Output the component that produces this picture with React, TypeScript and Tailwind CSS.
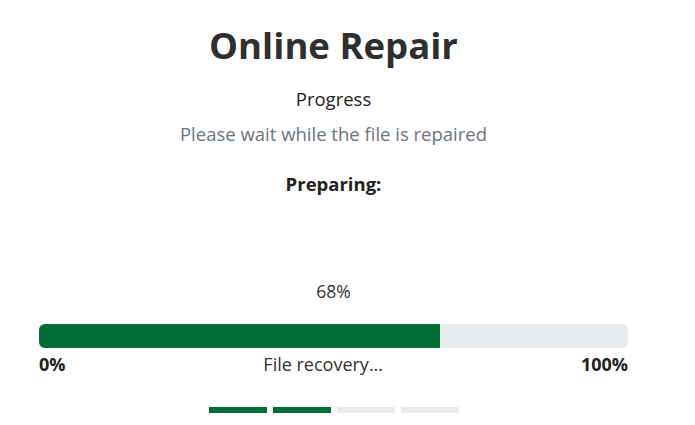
const steps = [true, true, false, false];

export default function App() {
  const percent = 68;
  return (
    <div className="min-h-[425px] bg-white text-[#333333]" style={{ fontFamily: "'Open Sans', 'Noto Sans', sans-serif" }}>
      <div className="ml-[39px] w-[589px] flex flex-col items-center pt-[21px]">
        <h1 className="text-[36.5px] leading-[48px] font-bold text-[#2f2f2f]">Online Repair</h1>
        <h2 className="mt-[16px] text-[18.5px] leading-[27px] font-medium text-[#222]">Progress</h2>
        <p className="mt-[8px] text-[18.5px] leading-[27px] text-[#6c757d]">Please wait while the file is repaired</p>
        <p className="mt-[23px] text-[18.5px] leading-[27px] font-bold text-[#222]">Preparing:</p>
        <div className="mt-[82px] text-[17.5px] leading-[24px] text-[#333]">{percent}%</div>
        <div className="mt-[21px] w-full h-[24px] rounded-[6px] bg-[#e9ecef] overflow-hidden flex">
          <div className="h-full bg-[#026e35]" style={{ width: `${percent}%` }} />
        </div>
        <div className="mt-[4px] w-full flex justify-between text-[18px] leading-[24px]">
          <span className="font-bold text-[#222]">0%</span>
          <span className="text-[#333]">File recovery...</span>
          <span className="font-bold text-[#222]">100%</span>
        </div>
        <div className="mt-[31px] flex gap-[6px]">
          {steps.map((done, i) => (
            <div key={i} className={done ? "w-[58px] h-[6px] bg-[#026e35]" : "w-[58px] h-[6px] bg-[#e9ecef]"} />
          ))}
        </div>
      </div>
    </div>
  );
}
